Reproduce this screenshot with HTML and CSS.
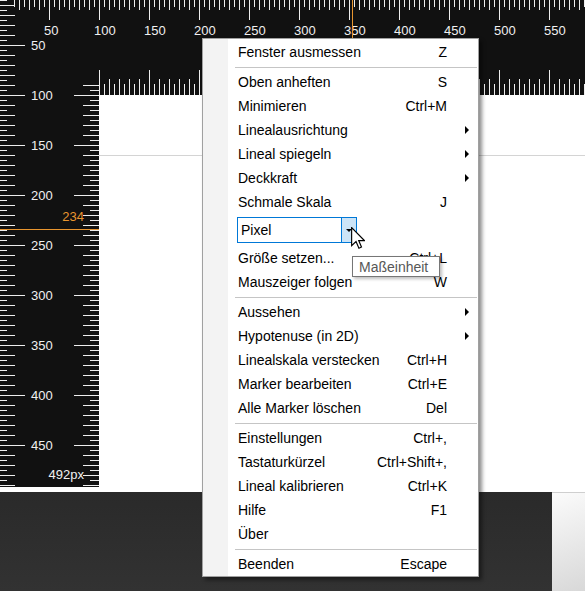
FILE: index.html
```html
<!DOCTYPE html>
<html lang="de">
<head>
<meta charset="utf-8">
<title>Lineal</title>
<link rel="stylesheet" href="styles.css">
</head>
<body>
<div class="screen">
  <div class="workspace">
    <div class="hruler">
      <div class="hticks-top"></div>
      <div class="hlabels">
        <span>50</span><span>100</span><span>150</span><span>200</span><span>250</span><span>300</span><span>350</span><span>400</span><span>450</span><span>500</span><span>550</span>
      </div>
      <div class="hticks-bottom"></div>
      <div class="mark-v"></div>
    </div>
    <div class="vruler">
      <div class="vlabels">
        <div class="vl">50</div><div class="vl">100</div><div class="vl">150</div><div class="vl">200</div><div class="vl">250</div><div class="vl">300</div><div class="vl">350</div><div class="vl">400</div><div class="vl">450</div>
        <div class="vsize">492px</div>
      </div>
      <div class="vticks"></div>
      <div class="mark-h"></div>
      <div class="mark-num">234</div>
    </div>
    <div class="content"><div class="edge"></div></div>
  </div>
  <div class="taskbar">
    <div class="dark"></div>
    <div class="light"></div>
  </div>

  <div class="menu">
    <div class="item"><span>Fenster ausmessen</span><span class="key">Z</span><span></span></div>
    <div class="sep"></div>
    <div class="item"><span>Oben anheften</span><span class="key">S</span><span></span></div>
    <div class="item"><span>Minimieren</span><span class="key">Ctrl+M</span><span></span></div>
    <div class="item"><span>Linealausrichtung</span><span class="key"></span><span class="arrow"></span></div>
    <div class="item"><span>Lineal spiegeln</span><span class="key"></span><span class="arrow"></span></div>
    <div class="item"><span>Deckkraft</span><span class="key"></span><span class="arrow"></span></div>
    <div class="item"><span>Schmale Skala</span><span class="key">J</span><span></span></div>
    <div class="combo-row">
      <div class="combo"><span class="val">Pixel</span><span class="btn"><span class="caret"></span></span></div>
    </div>
    <div class="item"><span>Größe setzen...</span><span class="key">Ctrl+L</span><span></span></div>
    <div class="item"><span>Mauszeiger folgen</span><span class="key">W</span><span></span></div>
    <div class="sep"></div>
    <div class="item"><span>Aussehen</span><span class="key"></span><span class="arrow"></span></div>
    <div class="item"><span>Hypotenuse (in 2D)</span><span class="key"></span><span class="arrow"></span></div>
    <div class="item"><span>Linealskala verstecken</span><span class="key">Ctrl+H</span><span></span></div>
    <div class="item"><span>Marker bearbeiten</span><span class="key">Ctrl+E</span><span></span></div>
    <div class="item"><span>Alle Marker löschen</span><span class="key">Del</span><span></span></div>
    <div class="sep"></div>
    <div class="item"><span>Einstellungen</span><span class="key">Ctrl+,</span><span></span></div>
    <div class="item"><span>Tastaturkürzel</span><span class="key">Ctrl+Shift+,</span><span></span></div>
    <div class="item"><span>Lineal kalibrieren</span><span class="key">Ctrl+K</span><span></span></div>
    <div class="item"><span>Hilfe</span><span class="key">F1</span><span></span></div>
    <div class="item"><span>Über</span><span class="key"></span><span></span></div>
    <div class="sep"></div>
    <div class="item"><span>Beenden</span><span class="key">Escape</span><span></span></div>
  </div>

  <div class="tooltip">Maßeinheit</div>

  <svg class="cursor" viewBox="0 0 12 19" width="14" height="22" aria-hidden="true">
    <path d="M0.5 0.5V16.2L4.3 12.6L6.8 18.3L9 17.3L6.6 11.7H11.5Z" fill="#fff" stroke="#000" stroke-width="1" stroke-linejoin="miter"/>
  </svg>
</div>
</body>
</html>
```

FILE: styles.css
```css
* { box-sizing: border-box; margin: 0; padding: 0; }

html, body {
  width: 585px;
  height: 591px;
  overflow: hidden;
}

body {
  background: #2d2d2d;
  font-family: "Liberation Sans", Arial, sans-serif;
}

.screen {
  position: relative;
  width: 585px;
  height: 591px;
}

/* ---------- workspace with rulers ---------- */
.workspace {
  display: grid;
  grid-template-columns: 99px 486px;
  grid-template-rows: 95px 397px;
  height: 492px;
  background: #fff;
}

.hruler {
  grid-column: 1 / 3;
  grid-row: 1;
  position: relative;
  display: flex;
  flex-direction: column;
  overflow: hidden;
  background: #111;
  color: #f0f0f0;
  font-size: 13px;
  line-height: 15px;
}

.hticks-top {
  height: 20px;
  margin-left: 14px;
  background:
    linear-gradient(to right, #eee 1px, transparent 1px) 0 0 / 5px 7px repeat-x,
    linear-gradient(to right, transparent 5px, #eee 5px, #eee 6px, transparent 6px) 0 0 / 10px 10px repeat-x,
    linear-gradient(to right, transparent 35px, #eee 35px, #eee 36px, transparent 36px) 0 0 / 50px 20px repeat-x;
}

.hlabels {
  display: flex;
  margin-left: 44px;
  padding-top: 3px;
}

.hlabels span {
  flex: none;
  width: 50px;
}

.hticks-bottom {
  margin-top: auto;
  margin-left: 99px;
  height: 25px;
  background:
    linear-gradient(to right, #eee 1px, transparent 1px) 0 100% / 5px 11px repeat-x,
    linear-gradient(to right, #eee 1px, transparent 1px) 0 100% / 10px 16px repeat-x,
    linear-gradient(to right, #eee 1px, transparent 1px) 0 100% / 50px 25px repeat-x;
}

.mark-v {
  position: absolute;
  left: 352px;
  top: 0;
  width: 1px;
  height: 95px;
  background: #e8952f;
}

.vruler {
  grid-column: 1;
  grid-row: 1 / 3;
  align-self: start;
  position: relative;
  z-index: 1;
  height: 487px;
  display: grid;
  grid-template-columns: 74px 25px;
  color: #f0f0f0;
  font-size: 13px;
  line-height: 15px;
  background:
    linear-gradient(#eee 1px, transparent 1px) 0 0 / 7px 5px repeat-y,
    linear-gradient(transparent 5px, #eee 5px, #eee 6px, transparent 6px) 0 0 / 15px 10px repeat-y,
    linear-gradient(transparent 45px, #eee 45px, #eee 46px, transparent 46px) 0 0 / 25px 50px repeat-y,
    linear-gradient(to bottom, transparent 95px, #111 95px);
}

.vlabels {
  grid-column: 1;
  grid-row: 1;
  display: flex;
  flex-direction: column;
  padding: 20px 0 0 31px;
}

.vl {
  flex: none;
  height: 50px;
  display: flex;
  align-items: center;
}

.vsize {
  margin-top: -3px;
  margin-right: -10px;
  text-align: right;
}

.vticks {
  grid-column: 2;
  grid-row: 1;
  margin-top: 85px;
  background:
    linear-gradient(#eee 1px, transparent 1px) 100% 0 / 9px 5px repeat-y,
    linear-gradient(#eee 1px, transparent 1px) 100% 0 / 16px 10px repeat-y,
    linear-gradient(transparent 10px, #eee 10px, #eee 11px, transparent 11px) 100% 0 / 25px 50px repeat-y;
}

.mark-h {
  position: absolute;
  left: 0;
  top: 229px;
  width: 99px;
  height: 1px;
  background: #e8952f;
}

.mark-num {
  position: absolute;
  right: 15px;
  top: 209px;
  color: #e8952f;
}

.content {
  grid-column: 2;
  grid-row: 2;
}

.content .edge {
  margin-top: 60px;
  border-top: 1px solid #d4d4d4;
}

/* ---------- bottom desktop strip ---------- */
.taskbar {
  display: flex;
  height: 99px;
}

.taskbar .dark {
  width: 552px;
  background: linear-gradient(#2a2a2a, #323232);
}

.taskbar .light {
  flex: 1;
  border-top: 1px solid #cfcfcf;
  background: linear-gradient(160deg, #fbfbfb, #d8d8d8);
}

/* ---------- context menu ---------- */
.menu {
  position: absolute;
  left: 202px;
  top: 38px;
  width: 277px;
  height: 539px;
  padding-top: 1px;
  border: 1px solid #a0a0a0;
  background: linear-gradient(to right, #f3f3f3 25px, #fff 25px);
  box-shadow: 3px 3px 4px rgba(0, 0, 0, 0.45);
  font-size: 14px;
  color: #000;
}

.item {
  display: grid;
  grid-template-columns: 1fr auto 22px;
  align-items: center;
  height: 24px;
  line-height: 24px;
  padding: 0 9px 0 35px;
  white-space: nowrap;
}

.key {
  text-align: right;
}

.arrow {
  justify-self: end;
  width: 0;
  height: 0;
  border-left: 4px solid #000;
  border-top: 4px solid transparent;
  border-bottom: 4px solid transparent;
}

.sep {
  height: 6px;
  margin: 0 1px 0 32px;
  background: linear-gradient(transparent 3px, #c5c5c5 3px, #c5c5c5 4px, transparent 4px);
}

.combo-row {
  height: 32px;
  padding: 3px 0 0 34px;
}

.combo {
  display: flex;
  width: 120px;
  height: 26px;
  border: 1px solid #0078d7;
  background: #fff;
}

.combo .val {
  flex: 1;
  padding-left: 3px;
  line-height: 24px;
}

.combo .btn {
  width: 15px;
  display: flex;
  align-items: center;
  justify-content: center;
  border-left: 1px solid #0078d7;
  background: #cce4f7;
}

.caret {
  width: 0;
  height: 0;
  border-top: 3px solid #000;
  border-left: 3px solid transparent;
  border-right: 3px solid transparent;
}

/* ---------- tooltip & pointer ---------- */
.tooltip {
  position: absolute;
  left: 352px;
  top: 256px;
  width: 88px;
  height: 21px;
  padding: 1px 0 0 6px;
  border: 1px solid #767676;
  background: #fff;
  box-shadow: 2px 2px 3px rgba(0, 0, 0, 0.25);
  color: #575757;
  font-size: 14px;
  line-height: 18px;
  white-space: nowrap;
}

.cursor {
  position: absolute;
  left: 351px;
  top: 227px;
}
```
